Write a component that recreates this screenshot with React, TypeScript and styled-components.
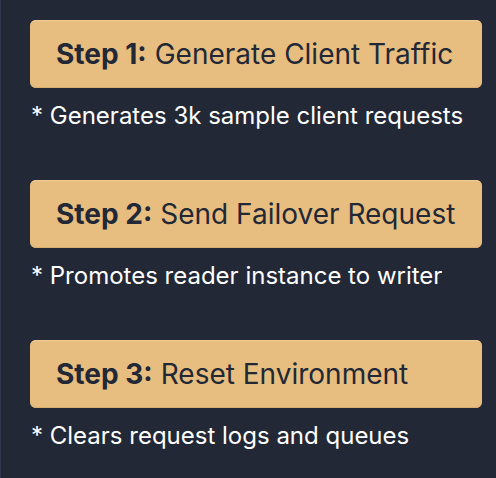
import React, { ReactElement } from "react";
import styled, { createGlobalStyle } from "styled-components";

const GlobalStyle = createGlobalStyle`
  html, body {
    margin: 0;
    padding: 0;
    background: #222836;
  }
  body {
    font-family: Inter, "Noto Sans", sans-serif;
  }
`;

const steps = [
  {
    label: "Step 1:",
    title: "Generate Client Traffic",
    note: "* Generates 3k sample client requests",
  },
  {
    label: "Step 2:",
    title: "Send Failover Request",
    note: "* Promotes reader instance to writer",
  },
  {
    label: "Step 3:",
    title: "Reset Environment",
    note: "* Clears request logs and queues",
  },
];

const Panel = styled.div`
  width: 496px;
  height: 478px;
  box-sizing: border-box;
  padding: 20px 14px 0 30px;
  background: #222836;
  border-left: 1px solid #30374a;
  display: flex;
  flex-direction: column;
  overflow: hidden;
`;

const Step = styled.div`
  height: 160px;
  flex-shrink: 0;
  display: flex;
  flex-direction: column;
`;

const StepButton = styled.button`
  width: 452px;
  height: 68px;
  flex-shrink: 0;
  margin-left: -1px;
  padding: 0 26px;
  border: none;
  border-radius: 6px;
  background: #e7be7f;
  box-shadow: inset 0 1px 0 #f0cb92, inset 0 -1px 0 #d7ad6f;
  color: #222836;
  font-family: Inter, "Noto Sans", sans-serif;
  font-size: 28px;
  white-space: nowrap;
  text-align: left;
  display: flex;
  align-items: center;
  cursor: pointer;

  b {
    font-weight: 700;
    margin-right: 8px;
  }
`;

const Note = styled.p`
  margin: 12px 0 0;
  color: #ffffff;
  font-size: 24px;
  line-height: 32px;
  white-space: nowrap;
`;

const App = (): ReactElement => {
  return (
    <>
      <GlobalStyle />
      <Panel>
        {steps.map((step) => (
          <Step key={step.label}>
            <StepButton>
              <b>{step.label}</b>
              {step.title}
            </StepButton>
            <Note>{step.note}</Note>
          </Step>
        ))}
      </Panel>
    </>
  );
};

export default App;
